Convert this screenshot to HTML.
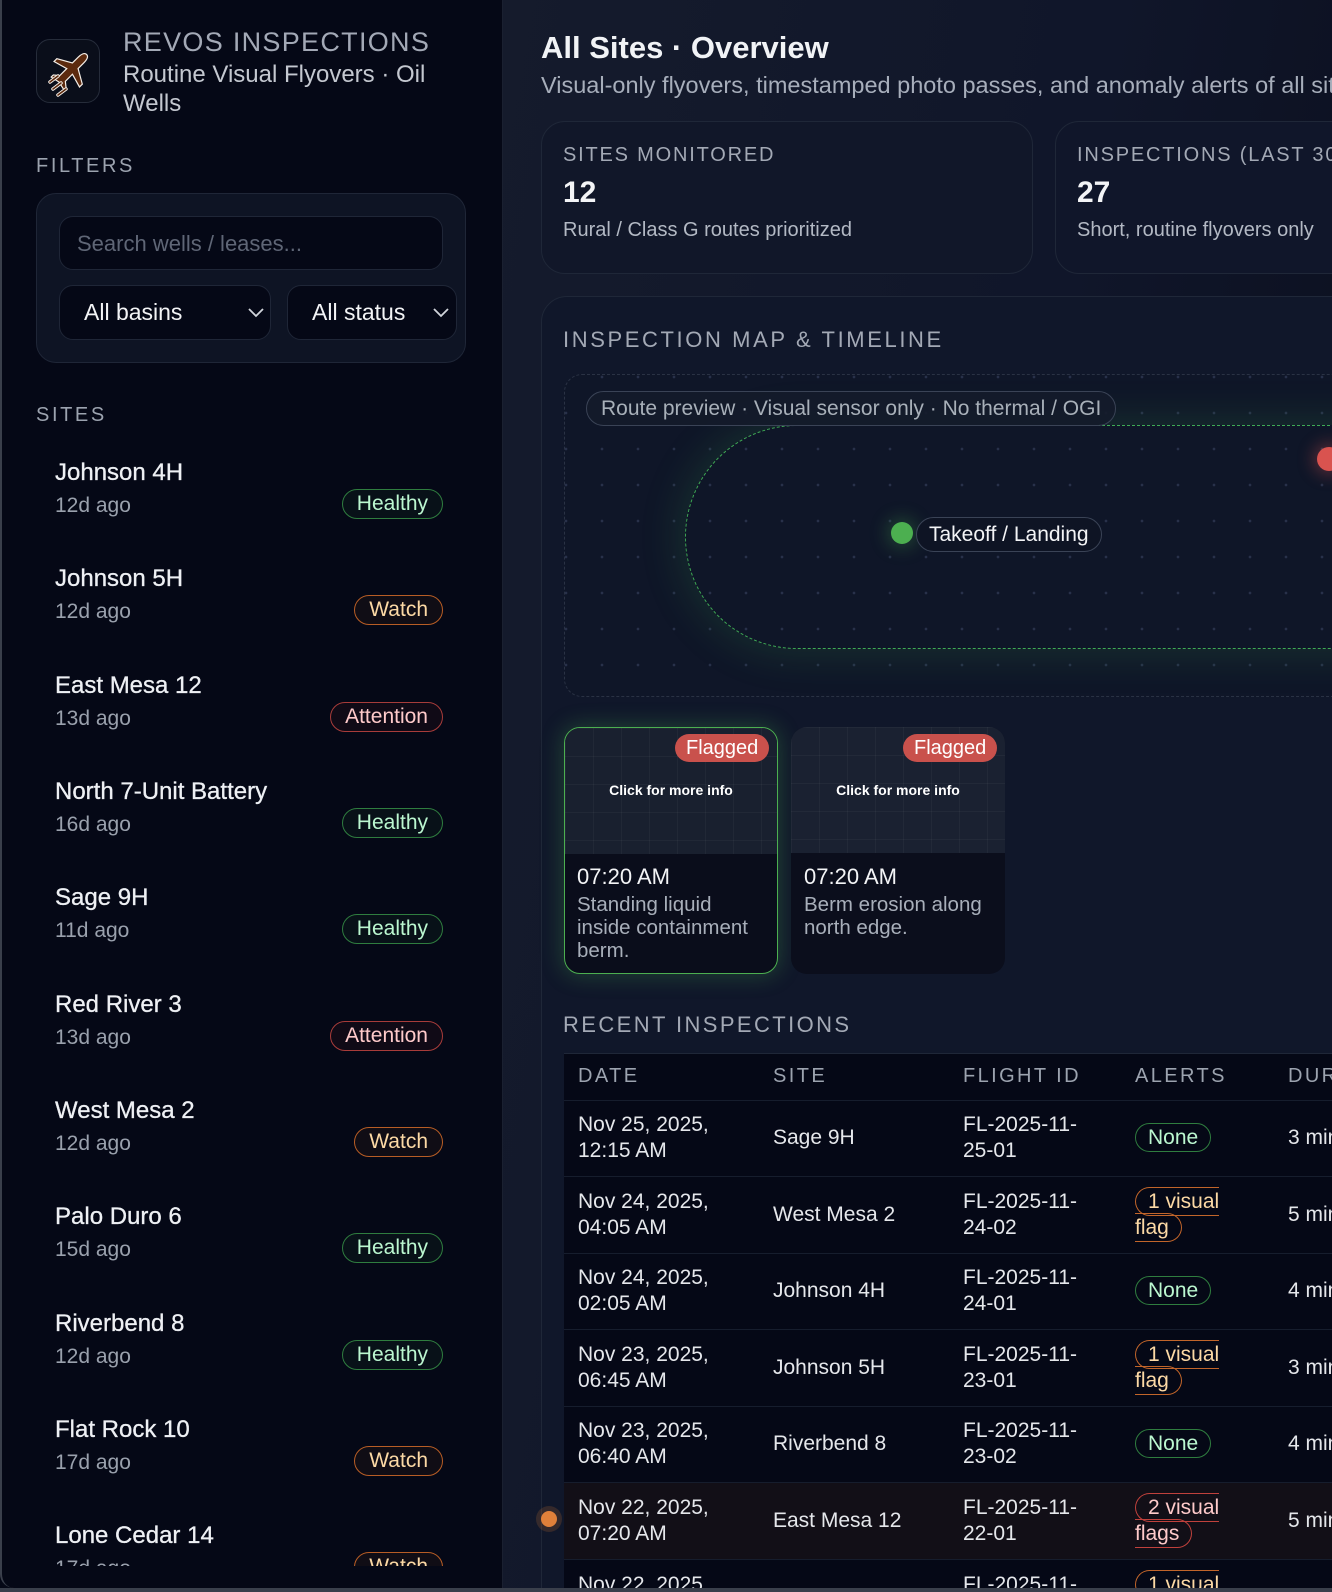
<!DOCTYPE html>
<html><head><meta charset="utf-8">
<style>
*{box-sizing:border-box;margin:0;padding:0}
html,body{width:1332px;height:1592px;overflow:hidden;background:#050816;font-family:"Liberation Sans",sans-serif;color:#e5e7eb}
.a{position:absolute;white-space:nowrap}
#side{position:absolute;left:0;top:0;width:503px;height:1588px;background:#050816;border-right:1px solid #1a2030;border-left:2px solid #3a3f4b;border-bottom-left-radius:14px;overflow:hidden}
#main{position:absolute;left:503px;top:0;width:829px;height:1588px;background:linear-gradient(100deg,#151b2c 0%,#10162a 55%,#0a0e1c 100%);overflow:hidden}
.lbl{color:#9ca3af;letter-spacing:2.6px}
.badge{position:absolute;height:30px;line-height:28px;border-radius:15px;padding:0 14px;font-size:21px;border:1.5px solid}
.h{border-color:#2f7d3f;color:#bbf7d0;background:rgba(34,80,45,.12)}
.w{border-color:#b85d25;color:#fcd9a5;background:rgba(120,60,20,.1)}
.t{border-color:#a83c3a;color:#fecaca;background:rgba(120,30,30,.1)}
.name{font-size:24px;color:#eef0f4;-webkit-text-stroke:0.3px #eef0f4}
.ago{font-size:21px;color:#9aa1ad}
table{border-collapse:collapse;font-size:21px;color:#e5e7eb}
td{padding:0 0 0 14px;vertical-align:middle;line-height:26px;height:76.5px;border-top:1px solid #161d2d;white-space:normal}
th{height:46px;text-align:left;padding-left:14px;font-weight:normal;font-size:20px;color:#9ca3af;letter-spacing:2.4px;white-space:nowrap}
.pill{border:1.5px solid;border-radius:16px;padding:2px 12px;line-height:26px}
.pn{border-color:#2f7d3f;color:#bbf7d0}
.po{border-color:#c2652a;color:#fcd9a5}
.pr{border-color:#c0413c;color:#fecaca}
</style></head><body>

<div id="side">
  <div class="a" style="left:34px;top:39px;width:64px;height:64px;border:1px solid #262c3a;border-radius:14px;background:#0a0e1a">
    <svg width="64" height="64" viewBox="0 0 64 64">
      <g transform="rotate(45 34 30)">
        <path d="M34 8 C37 8 38 12 38 16 L38 24 L52 32 L52 36 L38 32 L38 42 L43 46 L43 49 L34 47 L25 49 L25 46 L30 42 L30 32 L16 36 L16 32 L30 24 L30 16 C30 12 31 8 34 8 Z" fill="#5c2a0e" stroke="#f5efe8" stroke-width="1.2"/>
      </g>
      <path d="M13 42 L21 36 M16 49 L24 43 M21 55 L29 49" stroke="#f5efe8" stroke-width="3.5" stroke-linecap="round"/>
      <path d="M13 42 L21 36 M16 49 L24 43 M21 55 L29 49" stroke="#5c2a0e" stroke-width="1.6" stroke-linecap="round"/>
    </svg>
  </div>
  <div class="a" style="left:121px;top:27px;font-size:27px;letter-spacing:1.3px;color:#a3a9b6">REVOS INSPECTIONS</div>
  <div class="a" style="left:121px;top:60px;font-size:24px;line-height:29px;color:#c4c8d0;white-space:normal;width:330px">Routine Visual Flyovers · Oil Wells</div>
  <div class="a lbl" style="left:34px;top:155px;font-size:20px">FILTERS</div>
  <div class="a" style="left:34px;top:193px;width:430px;height:170px;background:#0e1424;border:1px solid #1f2637;border-radius:20px"></div>
  <div class="a" style="left:57px;top:216px;width:384px;height:54px;background:#050816;border:1px solid #1f2637;border-radius:14px;font-size:22px;color:#5f6676;padding:14px 17px">Search wells / leases...</div>
  <div class="a" style="left:57px;top:285px;width:212px;height:55px;background:#050816;border:1px solid #1f2637;border-radius:14px;font-size:23px;color:#f3f4f6;padding:13px 24px">All basins</div>
  <div class="a" style="left:285px;top:285px;width:170px;height:55px;background:#050816;border:1px solid #1f2637;border-radius:14px;font-size:23px;color:#f3f4f6;padding:13px 24px">All status</div>
  <svg class="a" style="left:245px;top:306px" width="18" height="12" viewBox="0 0 18 12"><path d="M2 3 L9 10 L16 3" fill="none" stroke="#d1d5db" stroke-width="1.8"/></svg>
  <svg class="a" style="left:430px;top:306px" width="18" height="12" viewBox="0 0 18 12"><path d="M2 3 L9 10 L16 3" fill="none" stroke="#d1d5db" stroke-width="1.8"/></svg>
  <div class="a lbl" style="left:34px;top:404px;font-size:20px">SITES</div>
  <div class="a" style="left:0;top:440px;width:501px;height:1126px;overflow:hidden">
    <div style="position:relative;top:-440px">
      <div class="a name" style="left:53px;top:459px">Johnson 4H</div><div class="a ago" style="left:53px;top:494px">12d ago</div><div class="badge h" style="right:60px;top:489px">Healthy</div>
      <div class="a name" style="left:53px;top:565px">Johnson 5H</div><div class="a ago" style="left:53px;top:600px">12d ago</div><div class="badge w" style="right:60px;top:595px">Watch</div>
      <div class="a name" style="left:53px;top:672px">East Mesa 12</div><div class="a ago" style="left:53px;top:707px">13d ago</div><div class="badge t" style="right:60px;top:702px">Attention</div>
      <div class="a name" style="left:53px;top:778px">North 7-Unit Battery</div><div class="a ago" style="left:53px;top:813px">16d ago</div><div class="badge h" style="right:60px;top:808px">Healthy</div>
      <div class="a name" style="left:53px;top:884px">Sage 9H</div><div class="a ago" style="left:53px;top:919px">11d ago</div><div class="badge h" style="right:60px;top:914px">Healthy</div>
      <div class="a name" style="left:53px;top:991px">Red River 3</div><div class="a ago" style="left:53px;top:1026px">13d ago</div><div class="badge t" style="right:60px;top:1021px">Attention</div>
      <div class="a name" style="left:53px;top:1097px">West Mesa 2</div><div class="a ago" style="left:53px;top:1132px">12d ago</div><div class="badge w" style="right:60px;top:1127px">Watch</div>
      <div class="a name" style="left:53px;top:1203px">Palo Duro 6</div><div class="a ago" style="left:53px;top:1238px">15d ago</div><div class="badge h" style="right:60px;top:1233px">Healthy</div>
      <div class="a name" style="left:53px;top:1310px">Riverbend 8</div><div class="a ago" style="left:53px;top:1345px">12d ago</div><div class="badge h" style="right:60px;top:1340px">Healthy</div>
      <div class="a name" style="left:53px;top:1416px">Flat Rock 10</div><div class="a ago" style="left:53px;top:1451px">17d ago</div><div class="badge w" style="right:60px;top:1446px">Watch</div>
      <div class="a name" style="left:53px;top:1522px">Lone Cedar 14</div><div class="a ago" style="left:53px;top:1557px">17d ago</div><div class="badge w" style="right:60px;top:1552px">Watch</div>
    </div>
  </div>
</div>

<div id="main">
  <div style="position:absolute;left:-503px;top:0;width:1332px;height:1588px;overflow:hidden">
    <div class="a" style="left:541px;top:30px;font-size:31px;font-weight:bold;color:#f1f3f6">All Sites · Overview</div>
    <div class="a" style="left:541px;top:72px;font-size:23.5px;color:#a7aebb">Visual-only flyovers, timestamped photo passes, and anomaly alerts of all sites</div>

    <div class="a" style="left:541px;top:121px;width:492px;height:153px;background:#111729;border:1px solid #1f2738;border-radius:24px"></div>
    <div class="a lbl" style="left:563px;top:144px;font-size:20px;letter-spacing:1.8px;color:#a3a9b5">SITES MONITORED</div>
    <div class="a" style="left:563px;top:176px;font-size:30px;font-weight:bold;color:#f3f4f6">12</div>
    <div class="a" style="left:563px;top:219px;font-size:20px;color:#b3b9c4">Rural / Class G routes prioritized</div>

    <div class="a" style="left:1055px;top:121px;width:492px;height:153px;background:#10162a;border:1px solid #1f2738;border-radius:24px"></div>
    <div class="a lbl" style="left:1077px;top:144px;font-size:20px;letter-spacing:1.8px;color:#a3a9b5">INSPECTIONS (LAST 30 DAYS)</div>
    <div class="a" style="left:1077px;top:176px;font-size:30px;font-weight:bold;color:#f3f4f6">27</div>
    <div class="a" style="left:1077px;top:219px;font-size:20px;color:#b3b9c4">Short, routine flyovers only</div>

    <div class="a" style="left:541px;top:296px;width:1006px;height:1320px;background:#10172a;border:1px solid #1f2738;border-radius:26px"></div>
    <div class="a lbl" style="left:563px;top:327px;font-size:22px;letter-spacing:2.6px;color:#a3a9b5">INSPECTION MAP &amp; TIMELINE</div>

    <div class="a" style="left:564px;top:374px;width:980px;height:323px;border:1px dashed #2a3244;border-radius:18px;background-color:#0f1628;background-image:radial-gradient(circle,#28314a 1.1px,transparent 1.6px);background-size:36px 36px;background-position:19px 20px;overflow:hidden">
      <div style="position:absolute;left:120px;top:50px;width:900px;height:224px;border:1px dashed #3faa55;border-radius:112px;box-shadow:0 0 40px 6px rgba(60,160,80,.18)"></div>
      <div style="position:absolute;left:326px;top:147px;width:22px;height:22px;border-radius:50%;background:#4caf50;box-shadow:0 0 18px 4px rgba(76,175,80,.3)"></div>
      <div style="position:absolute;left:351px;top:142px;height:35px;padding:0 12px;line-height:33px;border:1px solid #3a4356;border-radius:18px;background:#0e1424;font-size:21px;color:#f3f4f6;white-space:nowrap">Takeoff / Landing</div>
      <div style="position:absolute;left:752px;top:72px;width:24px;height:24px;border-radius:50%;background:#d9534f;box-shadow:0 0 16px 4px rgba(217,83,79,.35)"></div>
      <div style="position:absolute;left:21px;top:16px;height:35px;padding:0 14px;line-height:33px;border:1px solid #3a4356;border-radius:18px;background:rgba(20,27,42,.9);font-size:21px;color:#a8b0b9;white-space:nowrap">Route preview · Visual sensor only · No thermal / OGI</div>
    </div>

    <div class="a" style="left:564px;top:727px;width:214px;height:247px;border:1.5px solid #4caf50;border-radius:16px;overflow:hidden;background:#0a0d1b;box-shadow:0 0 22px 2px rgba(76,175,80,.28)">
      <div style="height:126px;background-color:#19202f;background-image:linear-gradient(rgba(255,255,255,.035) 1px,transparent 1px),linear-gradient(90deg,rgba(255,255,255,.035) 1px,transparent 1px);background-size:28px 28px"></div>
    </div>
    <div class="a" style="left:791px;top:727px;width:214px;height:247px;border-radius:16px;overflow:hidden;background:#0b0e1c">
      <div style="height:126px;background-color:#1a2131;background-image:linear-gradient(rgba(255,255,255,.035) 1px,transparent 1px),linear-gradient(90deg,rgba(255,255,255,.035) 1px,transparent 1px);background-size:28px 28px"></div>
    </div>
    <div class="a" style="left:675px;top:734px;height:28px;padding:0 11px;line-height:28px;border-radius:14px;background:#c9514c;font-size:20px;color:#fff">Flagged</div>
    <div class="a" style="left:903px;top:734px;height:28px;padding:0 11px;line-height:28px;border-radius:14px;background:#c9514c;font-size:20px;color:#fff">Flagged</div>
    <div class="a" style="left:564px;top:782px;width:214px;text-align:center;font-size:14px;font-weight:bold;color:#fff">Click for more info</div>
    <div class="a" style="left:791px;top:782px;width:214px;text-align:center;font-size:14px;font-weight:bold;color:#fff">Click for more info</div>
    <div class="a" style="left:577px;top:864px;font-size:22px;color:#f3f4f6">07:20 AM</div>
    <div class="a" style="left:804px;top:864px;font-size:22px;color:#f3f4f6">07:20 AM</div>
    <div class="a" style="left:577px;top:893px;width:185px;font-size:20.5px;line-height:23px;color:#a8afba;white-space:normal">Standing liquid inside containment berm.</div>
    <div class="a" style="left:804px;top:893px;width:185px;font-size:20.5px;line-height:23px;color:#a8afba;white-space:normal">Berm erosion along north edge.</div>

    <div class="a lbl" style="left:563px;top:1012px;font-size:22px;letter-spacing:2.4px;color:#a3a9b5">RECENT INSPECTIONS</div>

    <div class="a" style="left:564px;top:1053px;width:983px;height:535px;overflow:hidden;background:#050816;border-top:1px solid #1f2738">
      <table>
        <tr><th style="width:195px">DATE</th><th style="width:190px">SITE</th><th style="width:172px">FLIGHT ID</th><th style="width:153px">ALERTS</th><th>DURATION</th></tr>
        <tr><td><div style="width:150px">Nov 25, 2025, 12:15 AM</div></td><td>Sage 9H</td><td><div style="width:140px">FL-2025-11-25-01</div></td><td><div style="width:88px"><span class="pill pn">None</span></div></td><td>3 min</td></tr>
        <tr><td><div style="width:150px">Nov 24, 2025, 04:05 AM</div></td><td>West Mesa 2</td><td><div style="width:140px">FL-2025-11-24-02</div></td><td><div style="width:88px"><span class="pill po">1 visual flag</span></div></td><td>5 min</td></tr>
        <tr><td><div style="width:150px">Nov 24, 2025, 02:05 AM</div></td><td>Johnson 4H</td><td><div style="width:140px">FL-2025-11-24-01</div></td><td><div style="width:88px"><span class="pill pn">None</span></div></td><td>4 min</td></tr>
        <tr><td><div style="width:150px">Nov 23, 2025, 06:45 AM</div></td><td>Johnson 5H</td><td><div style="width:140px">FL-2025-11-23-01</div></td><td><div style="width:88px"><span class="pill po">1 visual flag</span></div></td><td>3 min</td></tr>
        <tr><td><div style="width:150px">Nov 23, 2025, 06:40 AM</div></td><td>Riverbend 8</td><td><div style="width:140px">FL-2025-11-23-02</div></td><td><div style="width:88px"><span class="pill pn">None</span></div></td><td>4 min</td></tr>
        <tr style="background:#120f17"><td><div style="width:150px">Nov 22, 2025, 07:20 AM</div></td><td>East Mesa 12</td><td><div style="width:140px">FL-2025-11-22-01</div></td><td><div style="width:88px"><span class="pill pr">2 visual flags</span></div></td><td>5 min</td></tr>
        <tr><td><div style="width:150px">Nov 22, 2025, 06:10 AM</div></td><td>Red River 3</td><td><div style="width:140px">FL-2025-11-22-02</div></td><td><div style="width:88px"><span class="pill po">1 visual flag</span></div></td><td>3 min</td></tr>
      </table>
    </div>
    <div class="a" style="left:536px;top:1506px;width:26px;height:26px;border-radius:50%;background:rgba(224,128,50,.18)"></div>
    <div class="a" style="left:541px;top:1511px;width:16px;height:16px;border-radius:50%;background:#e0803a"></div>
  </div>
</div>
<div class="a" style="left:0;top:1588px;width:1332px;height:4px;background:#3a3f4b"></div>
</body></html>
